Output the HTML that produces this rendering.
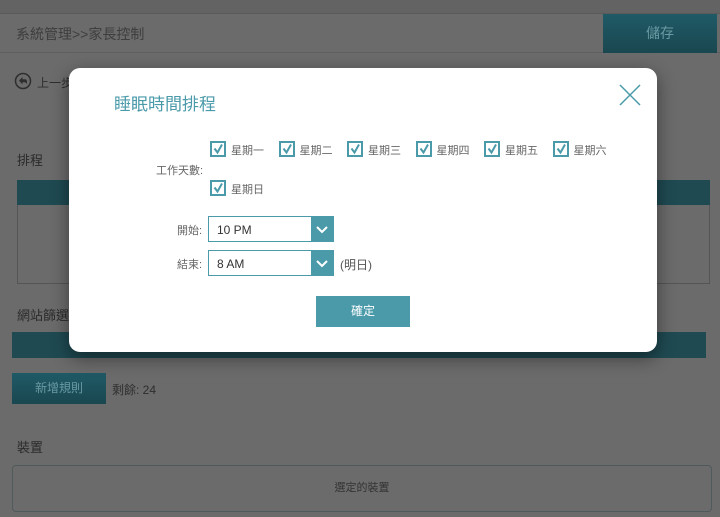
<!DOCTYPE html>
<html><head><meta charset="utf-8"><style>
*{margin:0;padding:0;box-sizing:border-box}
body{width:720px;height:517px;overflow:hidden;background:#6b6b6b;font-family:"Liberation Sans","Noto Sans CJK TC",sans-serif;position:relative;color:#333}
.a{position:absolute}
.t{font-size:12px;color:#2e2e2e}
.cb{position:absolute;width:16px;height:16px;border:2px solid #4a9aaa;background:#fff}
.cb svg{position:absolute;left:0;top:0}
.lbl{position:absolute;font-size:11px;color:#666}
.sel{position:absolute;left:208px;width:126px;height:26px;border:1px solid #4a9aaa;background:#fff;font-size:12px;color:#333;padding:6px 0 0 8px}
.sel .ar{position:absolute;right:0;top:0;width:22px;height:24px;background:#4a9aaa}
.dt{background:linear-gradient(#1f5a66,#1a4750)}
</style></head><body>
<div class="a" style="left:0;top:0;width:720px;height:14px;background:#636363;border-bottom:1px solid #5a5a5a"></div>
<div class="a" style="left:0;top:52px;width:720px;height:1px;background:#5e5e5e"></div>
<div class="a" style="left:16px;top:24px;font-size:14px;color:#3e3e3e">系統管理&gt;&gt;家長控制</div>
<div class="a dt" style="left:603px;top:14px;width:114px;height:39px;color:#6a9aa3;font-size:14px;text-align:center;line-height:39px">儲存</div>
<svg class="a" style="left:14px;top:72px" width="18" height="18" viewBox="0 0 18 18"><circle cx="9" cy="9" r="7.5" stroke="#2e2e2e" stroke-width="1.5" fill="none"/><path d="M5 8.5l3.5-3.5v2.3h2.5q2 0 2 2.5v2.5q-1-2-2.5-2H8.5V12.5z" fill="#2e2e2e"/></svg>
<div class="a t" style="left:37px;top:74px">上一步</div>
<div class="a" style="left:17px;top:150px;font-size:13px;color:#2a2a2a">排程</div>
<div class="a" style="left:17px;top:180px;width:693px;height:104px;border:1px solid #555"></div>
<div class="a" style="left:17px;top:180px;width:693px;height:25px;background:#1f4a52"></div>
<div class="a" style="left:17px;top:305px;font-size:13px;color:#2a2a2a">網站篩選器</div>
<div class="a" style="left:12px;top:332px;width:694px;height:26px;background:#1f4a52"></div>
<div class="a dt" style="left:12px;top:373px;width:94px;height:31px;color:#6a9aa3;font-size:12px;text-align:center;line-height:31px">新增規則</div>
<div class="a t" style="left:112px;top:381px">剩餘: 24</div>
<div class="a" style="left:17px;top:437px;font-size:13px;color:#2a2a2a">裝置</div>
<div class="a" style="left:12px;top:465px;width:700px;height:47px;border:1px solid #4f5a5c;border-radius:4px;text-align:center;line-height:45px;font-size:11px;color:#333">選定的裝置</div>

<div class="a" style="left:69px;top:68px;width:588px;height:284px;background:#fff;border-radius:11px;box-shadow:0 6px 18px rgba(0,0,0,.45)">
<div class="a" style="left:45px;top:22px;font-size:17px;color:#4a9aaa">睡眠時間排程</div>
<svg class="a" style="left:550px;top:16px" width="22" height="22" viewBox="0 0 22 22"><path d="M1 1L21 21M21 1L1 21" stroke="#4a9aaa" stroke-width="1.5" fill="none"/></svg>
</div>
<div class="lbl" style="left:156px;top:162px">工作天數:</div>
<div id="cbs"></div>
<div class="lbl" style="left:177px;top:222px">開始:</div>
<div class="lbl" style="left:177px;top:256px">結束:</div>
<div class="sel" style="top:216px">10 PM<div class="ar"><svg width="22" height="24"><path d="M6 10l5 5 5-5" stroke="#fff" stroke-width="2" fill="none"/></svg></div></div>
<div class="sel" style="top:250px">8 AM<div class="ar"><svg width="22" height="24"><path d="M6 10l5 5 5-5" stroke="#fff" stroke-width="2" fill="none"/></svg></div></div>
<div class="lbl" style="left:340px;top:256px;font-size:12px;color:#555">(明日)</div>
<div class="a" style="left:316px;top:296px;width:94px;height:31px;background:#4a9aaa;color:#fff;font-size:12px;text-align:center;line-height:31px">確定</div>
<script>
var d=["星期一","星期二","星期三","星期四","星期五","星期六","星期日"],h="";
for(var i=0;i<7;i++){var x=i<6?210+i*68.5:210,y=i<6?141:180;
h+='<div class="cb" style="left:'+x+'px;top:'+y+'px"><svg width="12" height="12"><path d="M2.5 5.5l3 4 4.5-8" stroke="#4a9aaa" stroke-width="2" fill="none"/></svg></div><div class="lbl" style="left:'+(x+21)+'px;top:'+(y+1)+'px">'+d[i]+'</div>';}
document.getElementById("cbs").innerHTML=h;
</script>
</body></html>
